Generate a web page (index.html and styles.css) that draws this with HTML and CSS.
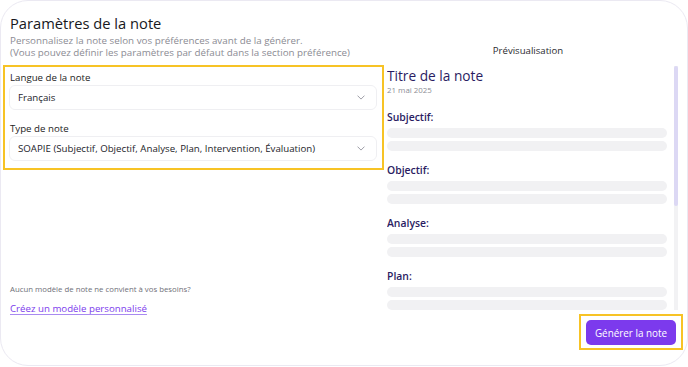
FILE: index.html
```html
<!DOCTYPE html>
<html lang="fr">
<head>
<meta charset="utf-8">
<title>Paramètres de la note</title>
<link rel="stylesheet" href="styles.css">
</head>
<body>
<div class="card">
  <div class="left">
    <div class="head">
      <h1 class="title">Paramètres de la note</h1>
      <p class="sub">Personnalisez la note selon vos préférences avant de la générer.<br>(Vous pouvez définir les paramètres par défaut dans la section préférence)</p>
    </div>
    <div class="form hl">
      <label class="label">Langue de la note</label>
      <div class="select"><span>Français</span><svg class="chev" viewBox="0 0 10 6" width="8" height="5"><path d="M1 1l4 4 4-4" fill="none" stroke="#9a9aa3" stroke-width="1.2" stroke-linecap="round" stroke-linejoin="round"/></svg></div>
      <label class="label second">Type de note</label>
      <div class="select"><span>SOAPIE (Subjectif, Objectif, Analyse, Plan, Intervention, Évaluation)</span><svg class="chev" viewBox="0 0 10 6" width="8" height="5"><path d="M1 1l4 4 4-4" fill="none" stroke="#9a9aa3" stroke-width="1.2" stroke-linecap="round" stroke-linejoin="round"/></svg></div>
    </div>
    <div class="foot">
      <p class="hint">Aucun modèle de note ne convient à vos besoins?</p>
      <a class="link" href="#">Créez un modèle personnalisé</a>
    </div>
  </div>
  <div class="right">
    <div class="ptitle">Prévisualisation</div>
    <div class="preview">
      <div class="pcontent">
        <div class="ntitle">Titre de la note</div>
        <div class="ndate">21 mai 2025</div>
        <div class="sec first">
          <div class="sech">Subjectif:</div>
          <div class="bar"></div><div class="bar"></div>
        </div>
        <div class="sec">
          <div class="sech">Objectif:</div>
          <div class="bar"></div><div class="bar"></div>
        </div>
        <div class="sec">
          <div class="sech">Analyse:</div>
          <div class="bar"></div><div class="bar"></div>
        </div>
        <div class="sec">
          <div class="sech">Plan:</div>
          <div class="bar"></div><div class="bar"></div>
        </div>
      </div>
      <div class="track"><div class="thumb"></div></div>
    </div>
    <div class="actions">
      <div class="hl btnwrap"><button class="btn">Générer la note</button></div>
    </div>
  </div>
</div>
</body>
</html>
```
FILE: styles.css
```css
* { box-sizing: border-box; }
html, body { margin: 0; padding: 0; background: #ffffff; }
body { font-family: "Open Sans", "Liberation Sans", sans-serif; color: #1c1c22; width: 688px; height: 367px; overflow: hidden; }
.card {
  width: 688px; height: 366px;
  border: 1px solid #ebe9f2;
  border-radius: 28px;
  display: flex;
  padding: 0 0 0 2px;
  overflow: hidden;
}
.left { width: 381px; display: flex; flex-direction: column; }
.head { padding: 13px 0 0 7px; height: 64px; }
.title { margin: 0; font-size: 14.7px; line-height: 19px; font-weight: 500; color: #18181d; }
.sub { margin: 2px 0 0; font-size: 9.8px; line-height: 12px; color: #8b8b93; }
.hl { border: 2px solid #f7c325; }
.form { padding: 4px 5px 7px 4px; display: flex; flex-direction: column; }
.label { font-size: 9.7px; line-height: 14px; color: #222; padding-left: 1px; }
.label.second { margin-top: 12px; }
.select {
  height: 25px;
  border: 1px solid #efeff2;
  border-radius: 6px;
  display: flex; align-items: center; justify-content: space-between;
  padding: 0 11px 0 8px;
  font-size: 9.7px; color: #23232a;
}
.chev { display: block; }
.foot { margin-top: auto; padding: 0 0 48px 7px; }
.hint { margin: 0; font-size: 7.8px; line-height: 12px; color: #6f6f78; }
.link { display: inline-block; margin-top: 5px; font-size: 9.7px; line-height: 13px; color: #7c3aed; text-decoration: underline; text-decoration-color: #a88af0; text-underline-offset: 2px; }
.right { flex: 1; display: flex; flex-direction: column; padding-left: 3px; }
.ptitle { text-align: center; font-size: 9.6px; color: #2a2a30; margin-top: 43px; line-height: 13px; padding-right: 18px; }
.preview { display: flex; height: 244px; margin-top: 9px; overflow: hidden; }
.pcontent { width: 280px; padding-top: 1px; }
.track { width: 4px; margin-left: 7px; background: #f2f2f4; height: 244px; }
.thumb { height: 140px; background: #dcd8f4; border-radius: 2px; }
.ntitle { font-size: 13.7px; line-height: 17px; font-weight: 500; color: #2a1c62; }
.ndate { font-size: 7.9px; line-height: 10px; color: #8d8d95; margin-top: 1px; }
.sec { margin-top: 12px; }
.sec.first { margin-top: 15px; }
.sech { font-size: 10.4px; line-height: 14px; font-weight: 600; color: #2a1c62; margin-bottom: 4px; }
.bar { height: 10px; border-radius: 5px; background: #f1f1f3; margin-bottom: 3px; }
.actions { display: flex; justify-content: flex-end; padding-right: 4px; margin-top: 4px; }
.btnwrap { padding: 4px 5px 3px; }
.btn {
  display: block;
  border: 0; border-radius: 5px;
  background: #7c3aed; color: #fff;
  font-family: inherit; font-size: 9.9px;
  width: 90px; height: 25px; padding: 0;
}
```
